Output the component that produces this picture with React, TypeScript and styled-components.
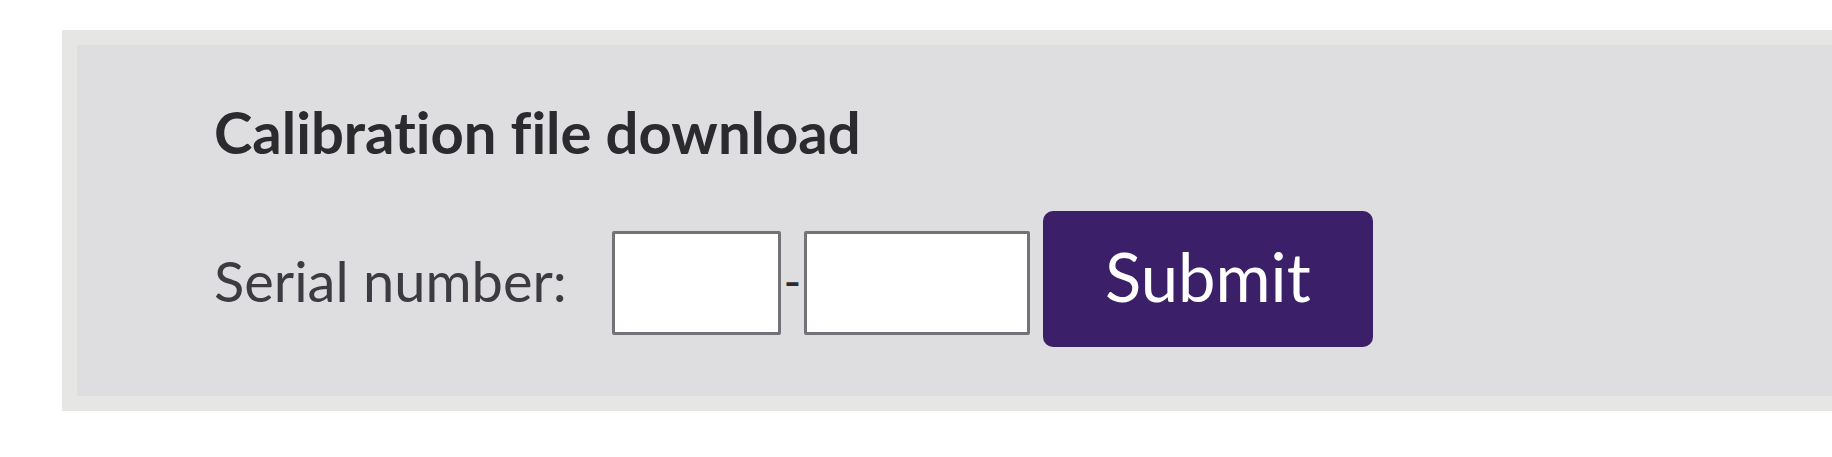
import styled, { createGlobalStyle } from 'styled-components';

const GlobalStyle = createGlobalStyle`
  html, body {
    margin: 0;
    padding: 0;
    background: #ffffff;
    overflow: hidden;
  }
  body {
    font-family: Lato, "Liberation Sans", sans-serif;
    font-variant-ligatures: none;
  }
`;

const Page = styled.div`
  width: 1832px;
  height: 457px;
  padding: 30px 0 0 62px;
  box-sizing: border-box;
`;

const Panel = styled.section`
  box-sizing: border-box;
  width: 1800px;
  height: 381px;
  border: 15px solid #e6e6e5;
  background: #dedee0;
  padding: 52px 0 0 137px;
`;

const Title = styled.h2`
  margin: 0 0 44px;
  font-size: 58px;
  line-height: 1.2;
  font-weight: 700;
  color: #2b2a2e;
  font-variant-ligatures: none;
`;

const Row = styled.div`
  display: flex;
  align-items: center;
`;

const Label = styled.label`
  font-size: 56px;
  font-weight: 400;
  color: #3d3b41;
  margin-right: 45px;
  margin-top: 4px;
`;

const SerialInput = styled.input<{ $width: number }>`
  box-sizing: border-box;
  width: ${(p) => p.$width}px;
  height: 104px;
  margin-top: 8px;
  border: 3px solid #747278;
  border-radius: 2px;
  background: #ffffff;
  padding: 0 12px;
  font-family: inherit;
  font-size: 40px;
  outline: none;
`;

const Dash = styled.span`
  width: 23px;
  text-align: center;
  font-size: 48px;
  color: #2b2a2e;
  margin-top: 4px;
`;

const SubmitButton = styled.button`
  box-sizing: border-box;
  width: 330px;
  height: 136px;
  margin-left: 13px;
  border: none;
  border-radius: 10px;
  background: #3c1f69;
  color: #ffffff;
  font-family: inherit;
  font-size: 67px;
  font-weight: 400;
  padding: 0 0 6px;
  cursor: pointer;
`;

const App = () => (
  <Page>
    <GlobalStyle />
    <Panel>
      <Title>Calibration file download</Title>
      <Row>
        <Label htmlFor="serial-a">Serial number:</Label>
        <SerialInput id="serial-a" type="text" $width={169} />
        <Dash>-</Dash>
        <SerialInput id="serial-b" type="text" $width={226} />
        <SubmitButton type="submit">Submit</SubmitButton>
      </Row>
    </Panel>
  </Page>
);

export default App;
